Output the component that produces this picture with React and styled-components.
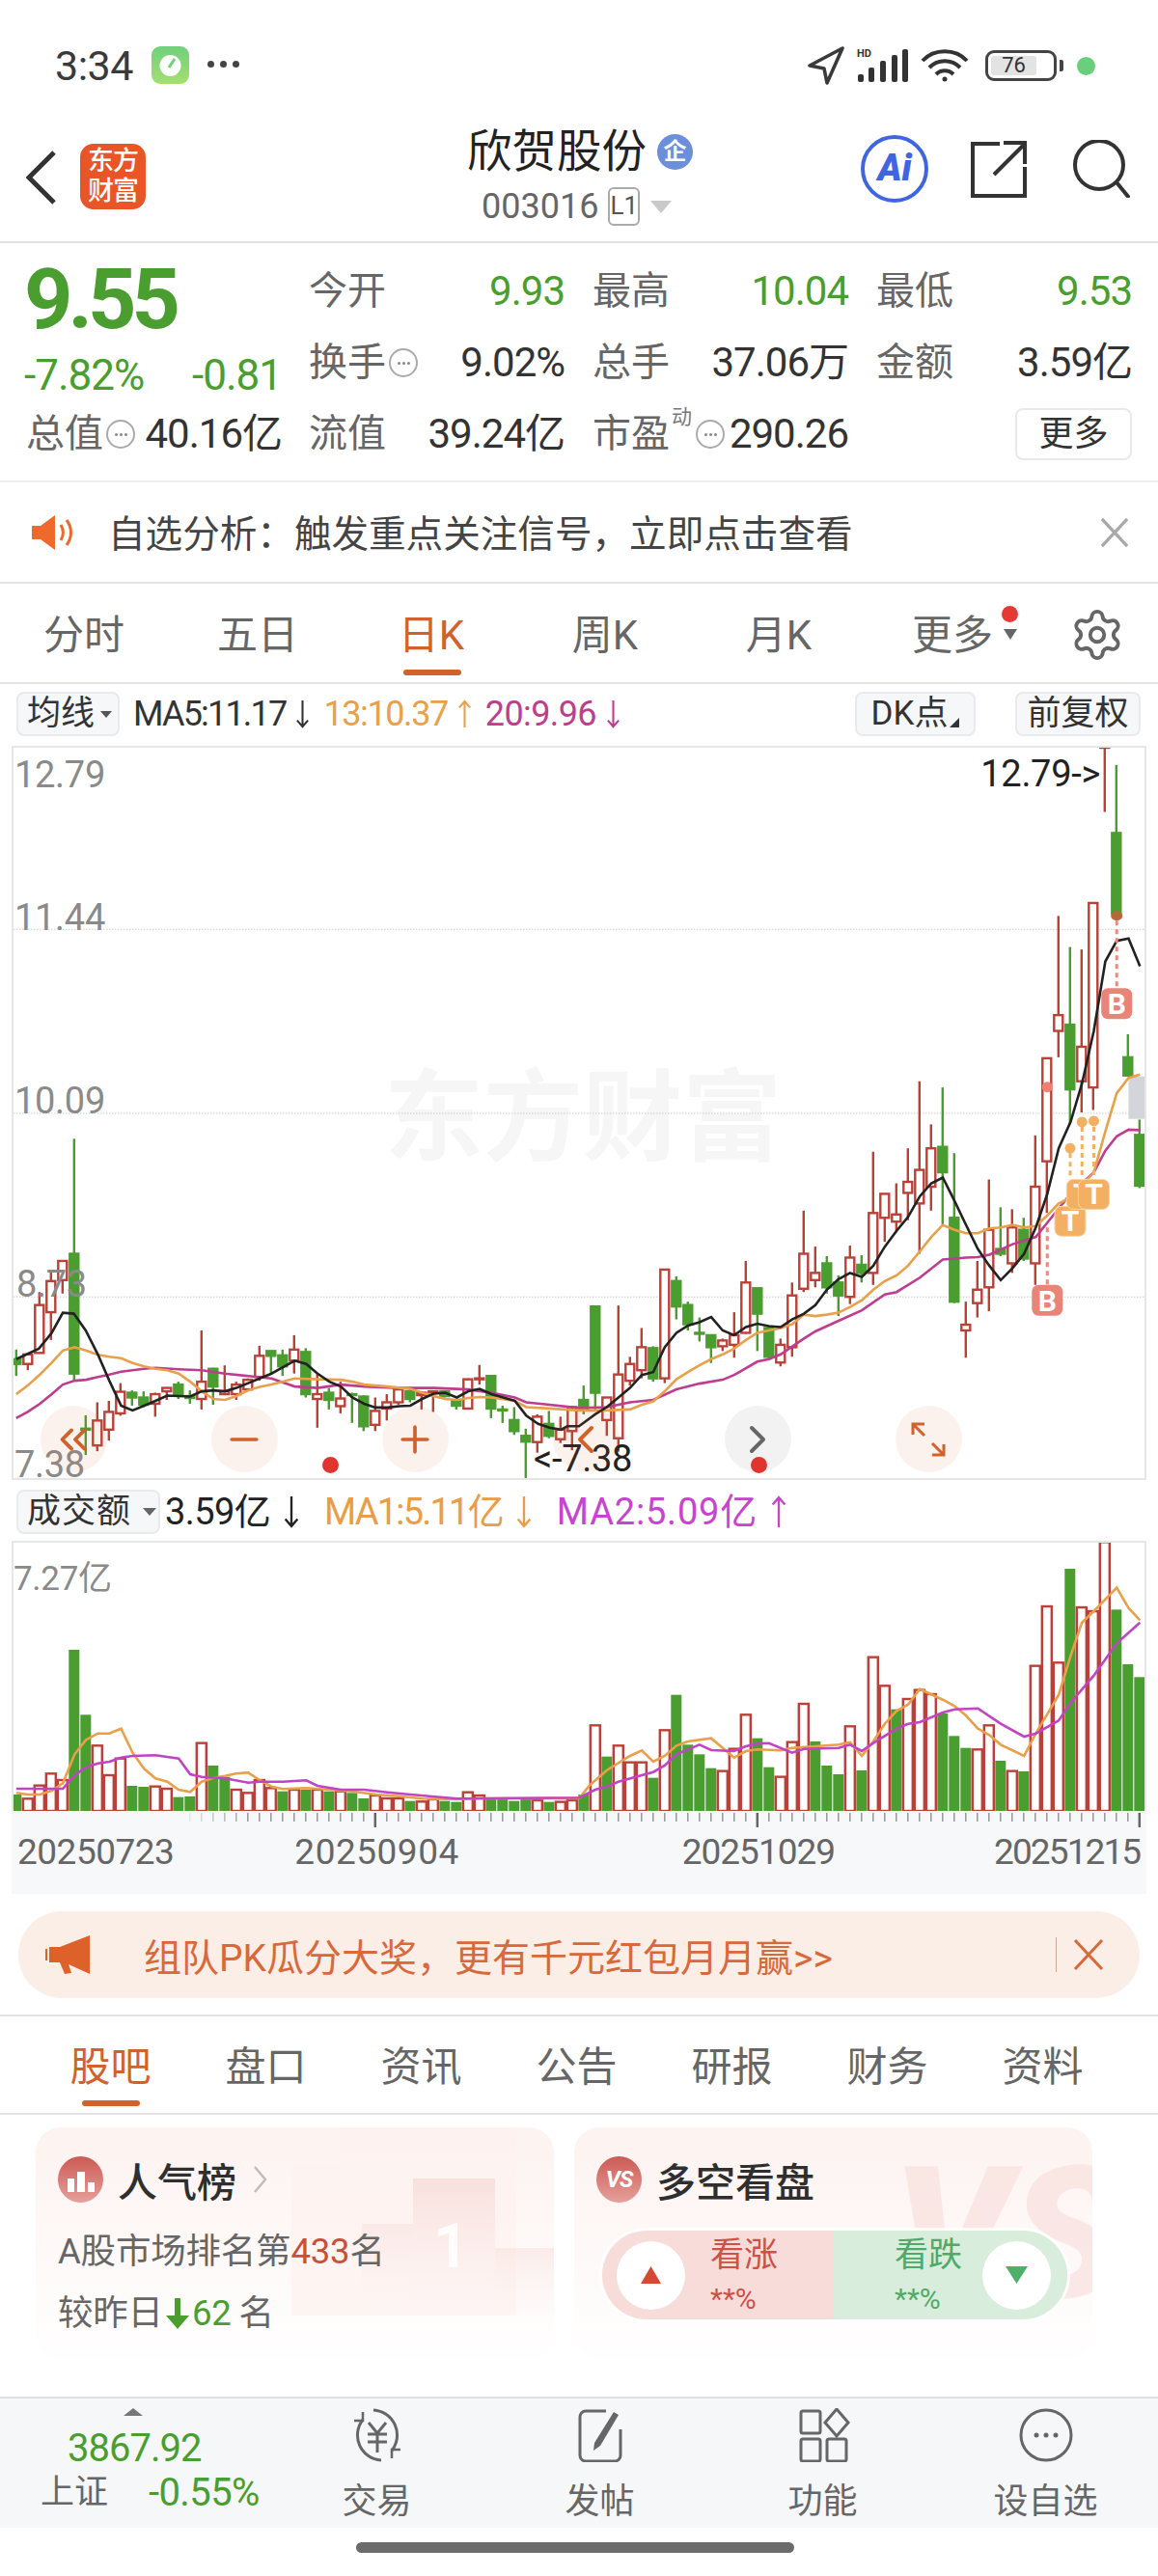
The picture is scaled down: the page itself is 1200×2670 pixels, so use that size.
import React from 'react';
import styled, { createGlobalStyle } from 'styled-components';
import { ChevronLeft, ChevronRight, ChevronsLeft, Minus, Plus, Settings } from 'lucide-react';

const GREEN = '#4a9e2f';
const RED = '#bb4038';
const ORANGE = '#e9a04a';
const ACCENT = '#d1622b';
const FONT = `Roboto, "Noto Sans CJK SC", sans-serif`;

const GlobalStyle = createGlobalStyle`
  html, body { margin: 0; padding: 0; background: #fff; }
  * { box-sizing: border-box; }
  body { font-family: ${FONT}; color: #333; }
`;

// Component Styles
const Page = styled.div`
  width: 1200px;
  height: 2670px;
  overflow: hidden;
  background: #fff;
`;

const Header = styled.header`
  height: 252px;
  border-bottom: 2px solid #e2e2e2;
`;

const StatusBar = styled.div`
  height: 124px;
  padding: 48px 65px 0 57px;
  display: flex;
  align-items: flex-start;
`;

const Clock = styled.span`
  font-size: 43px;
  line-height: 40px;
  letter-spacing: -0.5px;
  color: #3a3a3a;
  margin-right: 19px;
`;

const StatusDots = styled.span`
  display: flex;
  gap: 6px;
  margin: 15px 0 0 19px;
  i { width: 7px; height: 7px; border-radius: 50%; background: #444; }
`;

const StatusRight = styled.div`
  margin-left: auto;
  display: flex;
  align-items: center;
  height: 40px;
  gap: 12px;
`;

const BatteryBox = styled.div`
  width: 74px;
  height: 32px;
  border: 3px solid #444;
  border-radius: 9px;
  padding: 3px;
  display: flex;
  margin-left: 5px;
`;

const BatteryFill = styled.div`
  width: 76%;
  background: #e3e3e3;
  border-radius: 3px;
  font-size: 22px;
  line-height: 20px;
  text-align: center;
  color: #333;
`;

const BatteryTip = styled.i`
  width: 4px;
  height: 12px;
  background: #444;
  border-radius: 0 2px 2px 0;
  margin-left: -9px;
`;

const GreenDot = styled.i`
  width: 19px;
  height: 19px;
  border-radius: 50%;
  background: #69cf7c;
  margin-left: 2px;
`;

const NavBar = styled.div`
  height: 126px;
  padding: 8px 29px 0 27px;
  display: flex;
  align-items: flex-start;
`;

const BackIcon = styled.svg`
  margin-top: 24px;
`;

const Logo = styled.div`
  width: 68px;
  height: 68px;
  margin: 17px 0 0 25px;
  border-radius: 14px;
  background: #e95527;
  color: #fff;
  font-size: 27px;
  line-height: 31px;
  font-weight: 500;
  text-align: center;
  padding-top: 3px;
  letter-spacing: -1px;
`;

const TitleBlock = styled.div`
  width: 270px;
  margin-left: 333px;
`;

const Title = styled.div`
  display: flex;
  align-items: center;
  height: 50px;
  font-size: 46.5px;
  line-height: 50px;
  color: #222;
`;

const CompanyBadge = styled.span`
  width: 37px;
  height: 37px;
  margin-left: 11px;
  border-radius: 50%;
  background: #6c8fdc;
  color: #fff;
  font-size: 24px;
  line-height: 37px;
  font-weight: 700;
  text-align: center;
`;

const CodeRow = styled.div`
  display: flex;
  align-items: center;
  height: 42px;
  margin: 11px 0 0 15px;
  font-size: 36px;
  color: #666;
`;

const LevelTag = styled.span`
  width: 33px;
  height: 40px;
  margin-left: 10px;
  border: 2px solid #aaa;
  border-radius: 6px;
  font-size: 26px;
  line-height: 35px;
  text-align: center;
  color: #555;
`;

const DownCaret = styled.span`
  width: 0;
  height: 0;
  margin-left: ${p => (p.$m === undefined ? 11 : p.$m)}px;
  border-left: ${p => p.$size || 11}px solid transparent;
  border-right: ${p => p.$size || 11}px solid transparent;
  border-top: ${p => (p.$size || 11) * 1.25}px solid ${p => p.$color || '#c9c9c9'};
`;

const NavActions = styled.div`
  margin-left: auto;
  display: flex;
  align-items: center;
  margin-top: 8px;
`;

const AiButton = styled.div`
  width: 70px;
  height: 70px;
  border: 4px solid #3f66e0;
  border-radius: 50%;
  color: #3f66e0;
  font-size: 38px;
  line-height: 60px;
  font-weight: 900;
  font-style: italic;
  text-align: center;
  margin-right: 44px;
`;

const ShareIcon = styled.svg`
  margin-right: 47px;
`;

const Quote = styled.section`
  height: 248px;
  padding: 13px 27px 0;
  display: grid;
  grid-template-columns: 293px 294px 294px 265px;
  grid-auto-rows: 74px;
  border-bottom: 2px solid #eee;
`;

const Price = styled.div`
  margin-top: 8px;
  font-size: 88px;
  line-height: 74px;
  font-weight: 700;
  letter-spacing: -5px;
  margin-left: -2px;
  color: ${GREEN};
`;

const ChangeRow = styled.div`
  display: flex;
  justify-content: space-between;
  width: 267px;
  margin: 13px 0 0 -2px;
  font-size: 44px;
  line-height: 74px;
  letter-spacing: -1px;
  color: ${GREEN};
`;

const Stat = styled.div`
  display: flex;
  align-items: center;
  justify-content: space-between;
  width: 265px;
  font-size: 40px;
  line-height: 74px;
`;

const StatLabel = styled.span`
  display: flex;
  align-items: center;
  color: #666;
`;

const StatValue = styled.span`
  font-size: 42px;
  letter-spacing: -1px;
  color: ${p => p.$color || '#333'};
`;

const Superscript = styled.span`
  font-size: 21px;
  line-height: 21px;
  margin: -36px 1px 0 2px;
  color: #777;
`;

const Hint = styled.span`
  width: 30px;
  height: 30px;
  margin: 0 0 0 3px;
  border: 2px solid #aaa;
  border-radius: 50%;
  display: flex;
  justify-content: center;
  align-items: center;
  gap: 2px;
  i { width: 3px; height: 3px; background: #888; border-radius: 50%; }
`;

const MoreButton = styled.button`
  justify-self: end;
  align-self: center;
  width: 121px;
  height: 54px;
  padding: 0;
  background: #fff;
  border: 2px solid #e9e9e9;
  border-radius: 8px;
  font: 36px/50px ${FONT};
  color: #333;
`;

const Notice = styled.div`
  height: 105px;
  padding: 0 30px 0 33px;
  display: flex;
  align-items: center;
  gap: 36px;
  font-size: 38.6px;
  color: #444;
  border-bottom: 2px solid #e4e4e4;
  span { flex: 1; margin-left: -3px; margin-top: -3px; }
`;

const PeriodTabs = styled.nav`
  height: 104px;
  display: grid;
  grid-template-columns: repeat(6, 180px) 120px;
  margin-left: -3px;
  width: 1203px;
  border-bottom: 2px solid #e4e4e4;
`;

const PeriodTab = styled.div`
  position: relative;
  display: flex;
  justify-content: center;
  padding-top: 27px;
  font-size: 42px;
  line-height: 54px;
  color: ${p => (p.$active ? ACCENT : '#666')};
  ${p => p.$active && `
    &::after {
      content: '';
      position: absolute;
      left: 61px;
      bottom: 7px;
      width: 60px;
      height: 6px;
      border-radius: 3px;
      background: ${ACCENT};
    }
  `}
`;

const TabRedDot = styled.i`
  position: absolute;
  left: 141px;
  top: 23px;
  width: 17px;
  height: 17px;
  border-radius: 50%;
  background: #e53935;
`;

const TabCaret = styled.i`
  position: absolute;
  left: 143px;
  top: 47px;
  border-left: 7px solid transparent;
  border-right: 7px solid transparent;
  border-top: 11px solid #666;
`;

const GearCell = styled.div`
  display: flex;
  justify-content: center;
  padding-top: 24px;
  color: #666;
`;

const IndicatorRow = styled.div`
  height: 64px;
  padding: 8px 18px 0 17px;
  display: flex;
  align-items: flex-start;
  font-size: 36px;
  line-height: 46px;
  letter-spacing: -1.4px;
`;

const IndicatorButton = styled.div`
  display: flex;
  align-items: center;
  justify-content: ${p => (p.$center ? 'center' : 'flex-start')};
  gap: 6px;
  width: ${p => p.$w}px;
  height: 46px;
  padding: ${p => (p.$center ? 0 : '0 0 0 9px')};
  margin: ${p => p.$m || 0};
  background: #f6f7f9;
  border: 2px solid #e8eaee;
  border-radius: 8px;
  font-size: 35px;
  letter-spacing: ${p => p.$ls || 0}px;
  color: #333;
`;

const CornerMark = styled.i`
  border-left: 10px solid transparent;
  border-bottom: 10px solid #333;
  align-self: flex-end;
  margin: 0 0 7px -4px;
`;

const MaValue = styled.span`
  display: inline-flex;
  align-items: center;
  color: ${p => p.$color};
  margin-left: ${p => p.$m || 0}px;
  letter-spacing: ${p => (p.$ls === undefined ? 'inherit' : `${p.$ls}px`)};
`;

const ArrowSvg = styled.svg`
  margin: 0 ${p => p.$m}px;
  flex: none;
`;

const ChartBox = styled.div`
  position: relative;
  width: 1176px;
  height: ${p => p.$h}px;
  margin-left: 12px;
  border: 2px solid #e6e6e6;
  ${p => p.$open && 'border-bottom: 0;'}
  overflow: hidden;
`;

const PlotSvg = styled.svg`
  display: block;
`;

const AxisText = styled.text`
  font-family: ${FONT};
  font-size: ${p => p.$size || 38}px;
  letter-spacing: -0.3px;
  fill: ${p => p.$fill || '#8a8a8a'};
`;

const Watermark = styled.text`
  font-family: ${FONT};
  font-size: 103px;
  font-weight: 700;
  fill: #f6f6f6;
`;

const Badge = styled.text`
  font-family: ${FONT};
  font-size: 30px;
  font-weight: 700;
  fill: #fff;
  text-anchor: middle;
`;

const ZoomButton = styled.div`
  position: absolute;
  left: ${p => p.$x - 48.5}px;
  top: 682px;
  width: 69px;
  height: 69px;
  border-radius: 50%;
  background: ${p => (p.$grey ? 'rgba(0,0,0,0.05)' : 'rgba(225,110,50,0.09)')};
  color: ${p => (p.$grey ? '#666' : ACCENT)};
  display: flex;
  align-items: center;
  justify-content: center;
`;

const RedMark = styled.i`
  position: absolute;
  left: ${p => p.$x - 22.5}px;
  top: 735px;
  width: 17px;
  height: 17px;
  border-radius: 50%;
  background: #e0352f;
`;

const VolumeRow = styled(IndicatorRow)`
  height: 63px;
  padding-top: 10px;
  font-size: 38px;
`;

const DateAxis = styled.div`
  width: 1176px;
  height: 86px;
  margin-left: 12px;
  background: #f7f8fa;
`;

const TickSvg = styled.svg`
  display: block;
`;

const DateLabels = styled.div`
  display: flex;
  font-size: 37px;
  line-height: 40px;
  color: #666;
  margin-top: 3px;
`;

const DateLabel = styled.span`
  margin-left: ${p => p.$m}px;
  letter-spacing: ${p => p.$ls}px;
`;

const Promo = styled.div`
  width: 1162px;
  height: 90px;
  margin: 18px 0 17px 19px;
  padding: 0 37px 0 28px;
  display: flex;
  align-items: center;
  background: #fbeee6;
  border-radius: 45px;
  font-size: 39px;
  color: #d9683a;
  span { margin-left: 56px; flex: 1; }
  b { width: 1px; height: 36px; background: #c9a898; margin-right: 17px; }
`;

const ContentTabs = styled.nav`
  height: 104px;
  padding: 0 34px;
  display: grid;
  grid-template-columns: repeat(7, 161px);
  border-top: 2px solid #e4e4e4;
  border-bottom: 2px solid #e4e4e4;
`;

const ContentTab = styled(PeriodTab)`
  padding-top: 26px;
  &::after { left: 51px; bottom: 7px; }
`;

const Cards = styled.div`
  display: flex;
  gap: 21px;
  padding: 13px 0 0 37px;
  height: 292px;
`;

const Card = styled.div`
  position: relative;
  width: 537px;
  height: 240px;
  border-radius: 26px;
  overflow: hidden;
  background: linear-gradient(180deg, #fdf3f0 0%, #fefafa 65%, #fffefe 100%);
  padding: 30px 0 0 23px;
`;

const PodiumBackdrop = styled.svg`
  position: absolute;
  left: 200px;
  top: 0;
  width: 337px;
  height: 210px;
`;

const CardHead = styled.div`
  position: relative;
  display: flex;
  align-items: center;
  height: 48px;
  font-size: 41px;
  font-weight: 500;
  color: #2f2f2f;
`;

const CardIcon = styled.span`
  width: 47px;
  height: 48px;
  margin-right: 15px;
  border-radius: 50%;
  background: linear-gradient(180deg, #cc5a55 0%, #e6a09b 100%);
  color: #fff;
  font-size: 24px;
  font-weight: 700;
  font-style: italic;
  line-height: 48px;
  text-align: center;
  letter-spacing: -1px;
`;

const RankIconSvg = styled.svg`
  vertical-align: -5px;
`;

const MoreChevron = styled.svg`
  margin-left: 17px;
`;

const RankLine = styled.div`
  position: relative;
  display: flex;
  align-items: center;
  margin-top: ${p => p.$m}px;
  font-size: 36.5px;
  line-height: 42px;
  letter-spacing: -0.2px;
  color: #666;
  em { font-style: normal; color: ${p => p.$em || '#c8503a'}; margin: 0 ${p => p.$gap || 0}px 0 0; }
`;

const RankArrow = styled.svg`
  margin: 0 3px;
`;

const VsBackdrop = styled.span`
  position: absolute;
  left: 330px;
  top: 16px;
  font-size: 190px;
  line-height: 190px;
  font-weight: 900;
  font-style: italic;
  color: #f9e2df;
  opacity: 0.75;
`;

const VotePill = styled.div`
  position: relative;
  display: flex;
  width: 482px;
  height: 92px;
  margin: 29px 0 0 6px;
  border-radius: 46px;
  overflow: hidden;
  box-shadow: 0 0 0 3px rgba(255,255,255,0.8);
`;

const VoteSide = styled.div`
  flex: 1;
  display: flex;
  align-items: center;
  flex-direction: ${p => (p.$up ? 'row' : 'row-reverse')};
  padding: 0 ${p => (p.$up ? 0 : 17)}px 0 ${p => (p.$up ? 15 : 0)}px;
  background: ${p => (p.$up ? '#f8dcda' : '#d9eddc')};
  color: ${p => (p.$up ? '#cc5245' : '#4fa968')};
`;

const VoteCircle = styled.i`
  width: 71px;
  height: 71px;
  border-radius: 50%;
  background: #fff;
  display: flex;
  align-items: center;
  justify-content: center;
`;

const VoteText = styled.div`
  width: 70px;
  margin: ${p => (p.$up ? '0 0 0 26px' : '0 21px 0 0')};
  font-size: 35px;
  line-height: 42px;
  text-align: left;
  small { display: block; font-size: 30px; line-height: 32px; margin-top: 8px; white-space: nowrap; }
`;

const BottomBar = styled.footer`
  height: 136px;
  border-top: 2px solid #dedfe4;
  background: #f6f7f9;
  display: flex;
`;

const IndexBlock = styled.div`
  position: relative;
  width: 310px;
  padding: 32px 0 0 42px;
  display: flex;
  flex-wrap: wrap;
  align-content: flex-start;
  &::before {
    content: '';
    position: absolute;
    left: 128px;
    top: 10px;
    border-left: 10px solid transparent;
    border-right: 10px solid transparent;
    border-bottom: 8px solid #777;
  }
`;

const IndexValue = styled.div`
  width: 100%;
  padding-left: 28px;
  font-size: 40px;
  line-height: 40px;
  letter-spacing: -1px;
  color: ${GREEN};
`;

const IndexName = styled.span`
  font-size: 35px;
  line-height: 44px;
  margin-top: 4px;
  color: #666;
`;

const IndexChange = styled.span`
  font-size: 40px;
  line-height: 44px;
  margin: 4px 0 0 42px;
  letter-spacing: -0.6px;
  color: ${GREEN};
`;

const BarItems = styled.div`
  flex: 1;
  display: grid;
  grid-template-columns: repeat(4, 231px);
  margin-left: -35px;
`;

const BarCell = styled.div`
  display: flex;
  flex-direction: column;
  align-items: center;
  padding-top: 10px;
  font-size: 36px;
  line-height: 42px;
  color: #666;
  svg { display: block; margin-bottom: 20px; }
`;

const HomeIndicator = styled.div`
  width: 454px;
  height: 11px;
  margin: 15px 0 0 369px;
  border-radius: 6px;
  background: #6b6b6b;
`;

// Chart data, read off the daily K-line: [colour, high, body top, body bottom, low]
const candles = [
  ['g',1285,1305,1315,1340],['r',1295,1295,1315,1328],['r',1165,1192,1292,1292],['r',1120,1142,1207,1265],['r',1100,1100,1140,1168],
  ['g',845,1085,1335,1350],['g',1422,1450,1452,1505],['r',1395,1433,1485,1497],['r',1392,1415,1452,1475],['r',1355,1373,1418,1423],
  ['g',1370,1375,1385,1402],['g',1372,1385,1400,1405],['r',1375,1378,1398,1425],['r',1365,1365,1372,1390],['g',1352,1358,1380,1388],
  ['g',1370,1382,1386,1398],['r',1245,1352,1388,1410],['g',1323,1325,1362,1400],['r',1318,1372,1378,1380],['r',1352,1358,1378,1390],
  ['r',1345,1348,1368,1368],['r',1277,1298,1342,1350],['g',1288,1288,1298,1335],['g',1285,1297,1320,1340],['r',1255,1285,1308,1335],
  ['g',1282,1290,1378,1385],['r',1335,1378,1388,1448],['g',1365,1375,1390,1410],['r',1352,1387,1403,1418],['g',1375,1378,1380,1438],
  ['g',1380,1383,1445,1455],['r',1385,1413,1442,1455],['r',1378,1395,1408,1433],['r',1365,1368,1395,1400],['g',1368,1372,1388,1395],
  ['r',1372,1375,1380,1410],['r',1372,1372,1373,1415],['g',1370,1372,1382,1385],['g',1388,1392,1402,1410],['r',1345,1347,1408,1408],
  ['r',1317,1345,1347,1358],['g',1338,1340,1408,1428],['g',1402,1410,1412,1438],['g',1405,1432,1455,1463],['g',1450,1465,1477,1555],
  ['r',1420,1425,1478,1500],['g',1413,1440,1465,1470],['r',1425,1452,1472,1480],['r',1402,1405,1455,1495],['g',1360,1390,1408,1420],
  ['g',1195,1195,1375,1410],['r',1385,1385,1432,1465],['r',1193,1337,1470,1498],['r',1300,1315,1350,1360],['r',1240,1280,1328,1345],
  ['g',1278,1282,1345,1352],['r',1118,1118,1345,1355],['g',1132,1142,1195,1222],['g',1185,1192,1232,1245],['g',1218,1250,1252,1268],
  ['g',1255,1255,1280,1313],['r',1262,1266,1278,1288],['r',1207,1255,1275,1302],['r',1100,1145,1250,1252],['g',1157,1157,1210,1288],
  ['g',1237,1240,1300,1305],['r',1262,1275,1312,1320],['r',1145,1172,1280,1300],['r',995,1085,1158,1165],['r',1070,1125,1140,1155],
  ['g',1090,1105,1155,1168],['g',1130,1145,1172,1215],['r',1068,1093,1175,1190],['g',1088,1108,1125,1145],['r',872,1000,1125,1150],
  ['r',960,960,1010,1060],['r',938,1003,1018,1040],['r',865,935,958,1015],['r',725,910,980,1085],['r',815,865,945,995],
  ['g',738,862,915,1025],['g',875,1010,1185,1188],['r',1185,1233,1245,1302],['r',1100,1160,1188,1218],['r',930,1035,1155,1205],
  ['g',988,1075,1085,1090],['r',992,1030,1105,1125],['g',1010,1035,1095,1100],['r',838,945,1105,1150],['r',677,677,892,1000],
  ['r',380,587,620,675],['g',445,607,742,815],['r',450,653,725,790],['r',353,353,738,785],['r',27,27,29,163],
  ['g',65,207,375,380],['g',627,675,713,715],['g',805,837,943,948],
];

// [colour, bar top]
const volumes = [
  ['g',990],['r',1003],['r',962],['r',925],['r',945],['g',540],['g',742],['r',838],['r',930],['r',878],
  ['g',963],['g',966],['r',965],['r',972],['g',998],['g',996],['r',830],['g',900],['g',935],['r',975],
  ['r',985],['r',945],['r',970],['g',980],['r',975],['g',975],['r',975],['g',980],['r',980],['g',985],
  ['g',1002],['r',993],['r',1002],['r',1002],['g',1010],['r',1012],['r',1005],['g',1010],['g',1013],['r',983],
  ['r',993],['g',1005],['g',1005],['g',1010],['g',1005],['r',1008],['g',1013],['r',1013],['r',1008],['g',990],
  ['r',775],['g',872],['r',838],['r',890],['r',890],['g',938],['r',790],['g',680],['g',835],['g',865],
  ['g',908],['r',917],['r',848],['r',742],['g',815],['g',905],['r',935],['r',827],['r',708],['g',825],
  ['g',900],['g',927],['r',778],['g',915],['r',563],['r',652],['g',725],['r',693],['r',665],['r',678],
  ['g',738],['g',808],['g',845],['r',850],['r',775],['g',885],['r',917],['g',918],['r',590],['r',405],
  ['r',580],['g',288],['r',408],['r',420],['r',205],['g',415],['g',585],['g',625],
];

const ma5 = [
  [[44,1305],[105,1283],[140,1250],[170,1208],[200,1210],[232,1245],[265,1295],[296,1350],[328,1402],[359,1412],[390,1402],[421,1392],[453,1381],[484,1382],[515,1383],[546,1372],[578,1370],[609,1372],[640,1365],[672,1355],[703,1345],[735,1335],[766,1322],[798,1308],[829,1315],[860,1335],[892,1352],[923,1362],[954,1385],[986,1398],[1017,1406],[1049,1406],[1080,1403],[1111,1402],[1143,1388],[1174,1377],[1205,1375],[1237,1385],[1268,1372],[1299,1367],[1331,1378],[1394,1392],[1425,1423],[1457,1440],[1488,1448],[1519,1452]],
  [[-32,1445],[0,1445],[44,1420],[75,1405],[107,1385],[138,1365],[170,1338],[201,1332],[232,1280],[264,1250],[295,1235],[326,1228],[358,1217],[389,1245],[420,1255],[452,1238],[483,1231],[514,1236],[546,1238],[577,1222],[609,1210],[640,1192],[671,1160],[703,1138],[734,1125],[766,1133],[797,1110],[828,1070],[860,1037],[891,1008],[923,965],[954,938],[985,926],[1017,975],[1048,1025],[1080,1075],[1111,1110],[1142,1140],[1174,1115],[1205,1085],[1237,1030],[1268,960],[1299,865],[1331,810],[1362,730],[1394,620],[1425,475],[1456,432],[1488,427],[1519,485]],
];

const ma13 = [
  [[44,1378],[75,1360],[108,1337],[140,1312],[170,1287],[202,1280],[233,1287],[265,1296],[296,1300],[328,1303],[359,1313],[390,1320],[421,1325],[453,1328],[484,1335],[515,1352],[546,1372],[578,1388],[609,1390],[640,1382],[672,1370],[703,1363],[735,1358],[766,1352],[798,1345],[860,1347],[923,1348],[954,1352],[986,1358],[1049,1362],[1111,1367],[1143,1375],[1174,1382],[1205,1388],[1237,1390],[1268,1386],[1299,1384],[1331,1385],[1394,1392],[1425,1405],[1488,1408],[1568,1412]],
  [[0,1412],[75,1412],[138,1410],[170,1400],[201,1393],[232,1372],[264,1347],[295,1332],[326,1318],[358,1305],[389,1295],[420,1283],[452,1265],[483,1250],[514,1245],[546,1240],[577,1232],[609,1212],[640,1215],[671,1212],[703,1208],[734,1196],[766,1182],[797,1160],[828,1142],[860,1130],[891,1110],[923,1080],[954,1050],[985,1025],[1017,1035],[1048,1042],[1080,1042],[1111,1032],[1142,1030],[1174,1025],[1205,1030],[1237,1027],[1268,1005],[1299,980],[1331,968],[1394,915],[1425,830],[1456,750],[1488,718],[1519,711]],
];

const ma20 = [
  [[44,1428],[75,1415],[108,1398],[140,1378],[170,1358],[202,1350],[233,1348],[265,1342],[296,1337],[328,1331],[390,1325],[421,1323],[484,1326],[546,1328],[609,1335],[672,1340],[735,1345],[798,1362],[860,1365],[923,1358],[986,1362],[1080,1365],[1174,1365],[1268,1368],[1331,1375],[1394,1385],[1425,1395],[1488,1400],[1568,1407]],
  [[0,1407],[75,1405],[138,1395],[201,1390],[264,1368],[326,1356],[389,1348],[420,1338],[483,1310],[514,1305],[546,1295],[609,1262],[640,1247],[703,1225],[766,1203],[828,1170],[860,1165],[923,1135],[985,1097],[1048,1093],[1080,1092],[1111,1087],[1174,1065],[1237,1050],[1268,1020],[1331,960],[1394,915],[1425,870],[1456,840],[1488,826],[1519,827]],
];

const volMa1 = [
  [[44,985],[75,990],[108,990],[140,978],[170,955],[202,865],[233,820],[265,800],[296,800],[328,785],[359,860],[390,910],[421,940],[453,950],[484,975],[515,982],[546,950],[578,938],[609,932],[640,925],[672,922],[703,945],[735,965],[766,973],[829,970],[892,975],[954,980],[1017,990],[1080,995],[1143,1003],[1237,1005],[1300,1002],[1568,1002]],
  [[0,1002],[30,960],[75,915],[138,870],[170,853],[201,888],[232,870],[264,838],[295,825],[358,815],[420,875],[452,855],[483,850],[546,853],[577,845],[640,840],[703,835],[734,828],[766,870],[797,825],[828,770],[860,730],[891,710],[923,662],[985,695],[1017,715],[1048,745],[1080,785],[1111,805],[1142,835],[1205,870],[1237,800],[1299,680],[1331,560],[1362,455],[1394,420],[1456,347],[1488,410],[1519,448]],
];

const volMa2 = [
  [[44,972],[170,972],[202,930],[233,905],[265,893],[296,888],[328,875],[359,870],[421,868],[484,878],[515,927],[546,935],[609,940],[672,953],[703,950],[766,950],[829,946],[860,963],[923,975],[986,975],[1049,983],[1111,990],[1237,1003],[1331,1002],[1568,1000]],
  [[0,1000],[44,975],[75,965],[107,950],[170,930],[201,920],[232,900],[264,865],[326,835],[358,852],[420,855],[452,840],[483,832],[514,830],[577,860],[609,848],[703,845],[734,835],[766,855],[797,830],[860,785],[891,770],[923,765],[985,735],[1017,725],[1080,722],[1142,770],[1205,810],[1237,800],[1299,760],[1331,705],[1394,620],[1456,520],[1519,455]],
];

const cx = i => 16.8 + 12 * i;
const yK = z => 774 + (z - 27) * 0.4967;
const yV = z => 1530 + z / 3;
const xL = z => z / 2.613;
const xR = z => 600 + z / 2.613;

const linePoints = (parts, y) => [
  ...parts[0].map(([x, v]) => `${xL(x).toFixed(1)},${y(v).toFixed(1)}`),
  ...parts[1].map(([x, v]) => `${xR(x).toFixed(1)},${y(v).toFixed(1)}`),
].join(' ');

const col = c => (c === 'r' ? RED : GREEN);

// Icons
const Arrow = ({ up, color, w = 15, h = 30, m = 10 }) => (
  <ArrowSvg $m={m} width={w} height={h} viewBox="0 0 16 32">
    <path d={up ? 'M8 31V2M2 9l6-7 6 7' : 'M8 1v29M2 23l6 7 6-7'} fill="none" stroke={color} strokeWidth="2.2" />
  </ArrowSvg>
);

const CloseIcon = ({ size, color, weight = 3 }) => (
  <svg width={size} height={size + 2} viewBox="0 0 32 34">
    <path d="M2 2l28 30M30 2 2 32" fill="none" stroke={color} strokeWidth={weight} />
  </svg>
);

const BarIcon = ({ children }) => (
  <svg width="60" height="56" viewBox="0 0 60 56" fill="none" stroke="#666" strokeWidth="3">{children}</svg>
);

const StatusIcons = () => (
  <StatusRight>
    <svg width="40" height="40" viewBox="0 0 40 40">
      <path d="M37 2 3 20l15 3 3 15z" fill="none" stroke="#3a3a3a" strokeWidth="3.6" strokeLinejoin="round" />
    </svg>
    <svg width="54" height="36" viewBox="0 0 54 36">
      <text x="0" y="9" fontSize="11" fontWeight="700" fontFamily="Roboto" fill="#333">HD</text>
      <rect x="1" y="27" width="6" height="8" rx="2" fill="#333" />
      <rect x="12" y="20" width="6" height="15" rx="2" fill="#333" />
      <rect x="24" y="13" width="6" height="22" rx="2" fill="#333" />
      <rect x="36" y="7" width="6" height="28" rx="2" fill="#333" />
      <rect x="47" y="1" width="6" height="34" rx="2" fill="#333" />
    </svg>
    <svg width="50" height="36" viewBox="0 0 50 36" fill="none" stroke="#333" strokeWidth="4">
      <path d="M2 13C14 0 36 0 48 13" />
      <path d="M9 20c9-9 23-9 32 0" />
      <path d="M16 27c5-5 13-5 18 0" />
      <circle cx="25" cy="32" r="2.5" fill="#333" stroke="none" />
    </svg>
    <BatteryBox><BatteryFill>76</BatteryFill></BatteryBox>
    <BatteryTip />
    <GreenDot />
  </StatusRight>
);

const ChartK = () => (
  <PlotSvg width="1172" height="757" viewBox="14 775 1172 757">
    <Watermark x="398" y="1195">东方财富</Watermark>
    {[408, 792, 1175].map(z => (
      <line key={z} x1="14" x2="1186" y1={yK(z)} y2={yK(z)} stroke="#ccc" strokeWidth="1" strokeDasharray="1.5 1.5" />
    ))}
    <rect x={xR(1488)} y={yK(715)} width="18" height="44" fill="#d3d5da" />
    {candles.map(([c, hi, top, bot, lo], i) => (
      <g key={i} stroke={col(c)} strokeWidth="2.4">
        <line x1={cx(i)} x2={cx(i)} y1={yK(hi)} y2={yK(lo)} />
        {c === 'r'
          ? <rect x={cx(i) - 4.5} y={yK(top)} width="9" height={Math.max(yK(bot) - yK(top), 1)} fill="#fff" />
          : <rect x={cx(i) - 4.5} y={yK(top)} width="9" height={Math.max(yK(bot) - yK(top), 1)} fill={GREEN} />}
      </g>
    ))}
    <line x1={cx(94) - 5} x2={cx(94) + 5} y1={yK(27)} y2={yK(27)} stroke={RED} strokeWidth="2" />
    <polyline points={linePoints(ma20, yK)} fill="none" stroke="#be3d8f" strokeWidth="2.6" />
    <polyline points={linePoints(ma13, yK)} fill="none" stroke={ORANGE} strokeWidth="2.6" />
    <polyline points={linePoints(ma5, yK)} fill="none" stroke="#222" strokeWidth="2.6" />

    <g stroke="#ea8a7d" strokeWidth="3" strokeDasharray="5 4">
      <line x1={xR(1268)} x2={xR(1268)} y1={yK(1030)} y2={yK(1150)} />
      <line x1={xR(1456)} x2={xR(1456)} y1={yK(390)} y2={yK(530)} />
    </g>
    <g stroke="#f3b063" strokeWidth="3" strokeDasharray="5 4">
      <line x1={xR(1330)} x2={xR(1330)} y1={yK(875)} y2={yK(930)} />
      <line x1={xR(1362)} x2={xR(1362)} y1={yK(820)} y2={yK(930)} />
      <line x1={xR(1394)} x2={xR(1394)} y1={yK(820)} y2={yK(930)} />
    </g>
    <ellipse cx={xR(1268)} cy={yK(737)} rx="5.5" ry="5.5" fill="#f07f72" />
    <ellipse cx={xR(1456)} cy={yK(380)} rx="6" ry="5" fill="#b4693a" />
    <circle cx={xR(1330)} cy={yK(865)} r="5.5" fill="#f3b063" />
    <circle cx={xR(1362)} cy={yK(810)} r="5.5" fill="#f3b063" />
    <circle cx={xR(1394)} cy={yK(808)} r="5.5" fill="#f3b063" />

    {[[1268, 1182, 'B'], [1456, 563, 'B']].map(([x, z, t]) => (
      <g key={z}>
        <rect x={xR(x) - 16} y={yK(z) - 16} width="32" height="32" rx="7" fill="#ea8478" />
        <Badge x={xR(x)} y={yK(z) + 11}>{t}</Badge>
      </g>
    ))}
    {[[1330, 1016], [1362, 960], [1394, 960]].map(([x, z]) => (
      <g key={x}>
        <rect x={xR(x) - 16} y={yK(z) - 15} width="32" height="31" rx="7" fill="#f3b063" stroke="#f8d5aa" strokeWidth="1" />
        <Badge x={xR(x)} y={yK(z) + 11}>T</Badge>
      </g>
    ))}

    <AxisText x="15" y={yK(112)}>12.79</AxisText>
    <AxisText x="15" y={yK(410)}>11.44</AxisText>
    <AxisText x="15" y={yK(792)}>10.09</AxisText>
    <AxisText x="17" y={yK(1175)}>8.73</AxisText>
    <AxisText x="15" y={yK(1552)}>7.38</AxisText>
    <AxisText x="1140" y={yK(110)} textAnchor="end" $fill="#222">12.79-&gt;</AxisText>
    <AxisText x="553" y={yK(1538)} $fill="#222">&lt;-7.38</AxisText>
  </PlotSvg>
);

const ChartVolume = () => (
  <PlotSvg width="1172" height="278" viewBox="14 1599 1172 278">
    <AxisText x="14" y="1648" $size={35}>7.27亿</AxisText>
    {volumes.map(([c, top], i) => (c === 'r'
      ? <rect key={i} x={cx(i) - 5} y={yV(top)} width="10" height={1877 - yV(top)} fill="#fff" stroke={RED} strokeWidth="2.4" />
      : <rect key={i} x={cx(i) - 5.5} y={yV(top)} width="11" height={1877 - yV(top)} fill={GREEN} />
    ))}
    <polyline points={linePoints(volMa1, yV)} fill="none" stroke={ORANGE} strokeWidth="2.6" />
    <polyline points={linePoints(volMa2, yV)} fill="none" stroke="#c044c4" strokeWidth="2.6" />
  </PlotSvg>
);

const DateTicks = () => (
  <TickSvg width="1176" height="20" viewBox="12 1877 1176 20">
    {Array.from({ length: 83 }, (_, k) => k + 15).map(i => {
      const major = i === 31 || i === 64 || i === 97;
      return (
        <line
          key={i}
          x1={cx(i)}
          x2={cx(i)}
          y1="1879"
          y2={major ? 1894 : 1888}
          stroke={major ? '#666' : '#999'}
          strokeWidth={major ? 2.5 : 1.5}
          opacity={i < 20 ? 0.2 + (i - 15) * 0.15 : 1}
        />
      );
    })}
  </TickSvg>
);

// Main Component
export default function App() {
  return (
    <Page>
      <GlobalStyle />
      <Header>
        <StatusBar>
          <Clock>3:34</Clock>
          <svg width="39" height="39" viewBox="0 0 39 39">
            <defs>
              <linearGradient id="appGreen" x1="0" y1="0" x2="0" y2="1">
                <stop offset="0" stopColor="#6fd07c" />
                <stop offset="1" stopColor="#a3e06f" />
              </linearGradient>
            </defs>
            <rect width="39" height="39" rx="9" fill="url(#appGreen)" />
            <circle cx="19.5" cy="20" r="11" fill="#fff" />
            <path d="M18 22l6-9" stroke="#6fd07c" strokeWidth="3" />
          </svg>
          <StatusDots><i /><i /><i /></StatusDots>
          <StatusIcons />
        </StatusBar>
        <NavBar>
          <BackIcon width="31" height="56" viewBox="0 0 31 56">
            <path d="M29 2 3 28l26 26" fill="none" stroke="#333" strokeWidth="5" />
          </BackIcon>
          <Logo>东方<br />财富</Logo>
          <TitleBlock>
            <Title>欣贺股份<CompanyBadge>企</CompanyBadge></Title>
            <CodeRow>003016<LevelTag>L1</LevelTag><DownCaret /></CodeRow>
          </TitleBlock>
          <NavActions>
            <AiButton>Ai</AiButton>
            <ShareIcon width="58" height="60" viewBox="0 0 58 60">
              <path d="M30 4H2v54h54V28M24 36 55 5M34 3h22v22" fill="none" stroke="#333" strokeWidth="4" />
            </ShareIcon>
            <svg width="60" height="60" viewBox="0 0 60 60">
              <circle cx="28" cy="26" r="25" fill="none" stroke="#333" strokeWidth="4" />
              <path d="m46 44 13 16" stroke="#333" strokeWidth="4" />
            </svg>
          </NavActions>
        </NavBar>
      </Header>

      <Quote>
        <Price>9.55</Price>
        <Stat><StatLabel>今开</StatLabel><StatValue $color={GREEN}>9.93</StatValue></Stat>
        <Stat><StatLabel>最高</StatLabel><StatValue $color={GREEN}>10.04</StatValue></Stat>
        <Stat><StatLabel>最低</StatLabel><StatValue $color={GREEN}>9.53</StatValue></Stat>

        <ChangeRow><span>-7.82%</span><span>-0.81</span></ChangeRow>
        <Stat><StatLabel>换手<Hint><i /><i /><i /></Hint></StatLabel><StatValue>9.02%</StatValue></Stat>
        <Stat><StatLabel>总手</StatLabel><StatValue>37.06万</StatValue></Stat>
        <Stat><StatLabel>金额</StatLabel><StatValue>3.59亿</StatValue></Stat>

        <Stat><StatLabel>总值<Hint><i /><i /><i /></Hint></StatLabel><StatValue>40.16亿</StatValue></Stat>
        <Stat><StatLabel>流值</StatLabel><StatValue>39.24亿</StatValue></Stat>
        <Stat>
          <StatLabel>市盈<Superscript>动</Superscript><Hint><i /><i /><i /></Hint></StatLabel>
          <StatValue>290.26</StatValue>
        </Stat>
        <MoreButton>更多</MoreButton>
      </Quote>

      <Notice>
        <svg width="46" height="36" viewBox="0 0 46 36">
          <path d="M0 11h9L24 0v36L9 25H0z" fill="#ee6a2c" />
          <path d="M30 10c3 5 3 11 0 16M36 5c6 8 6 18 0 26" fill="none" stroke="#ee6a2c" strokeWidth="3" />
        </svg>
        <span>自选分析：触发重点关注信号，立即点击查看</span>
        <CloseIcon size={30} color="#a8a8a8" weight={3.5} />
      </Notice>

      <PeriodTabs>
        <PeriodTab>分时</PeriodTab>
        <PeriodTab>五日</PeriodTab>
        <PeriodTab $active>日K</PeriodTab>
        <PeriodTab>周K</PeriodTab>
        <PeriodTab>月K</PeriodTab>
        <PeriodTab>更多<TabRedDot /><TabCaret /></PeriodTab>
        <GearCell><Settings size={58} strokeWidth={1.6} /></GearCell>
      </PeriodTabs>

      <IndicatorRow>
        <IndicatorButton $w={107}>均线<DownCaret $m={0} $size={6} $color="#555" /></IndicatorButton>
        <MaValue $color="#333" $m={14} $ls={-1.8}>MA5:11.17<Arrow color="#333" /></MaValue>
        <MaValue $color={ORANGE} $m={4}>13:10.37<Arrow up color={ORANGE} /></MaValue>
        <MaValue $color="#be3d8f" $m={4} $ls={-0.6}>20:9.96<Arrow color="#be3d8f" /></MaValue>
        <IndicatorButton $w={125} $center $m="0 41px 0 auto">DK点<CornerMark /></IndicatorButton>
        <IndicatorButton $w={130} $center>前复权</IndicatorButton>
      </IndicatorRow>

      <ChartBox $h={761}>
        <ChartK />
        <ZoomButton $x={76}><ChevronsLeft size={46} strokeWidth={2} /></ZoomButton>
        <ZoomButton $x={253}><Minus size={44} strokeWidth={2} /></ZoomButton>
        <ZoomButton $x={430}><Plus size={44} strokeWidth={2} /></ZoomButton>
        <ZoomButton $x={607}><ChevronLeft size={48} strokeWidth={2} /></ZoomButton>
        <ZoomButton $x={785} $grey><ChevronRight size={48} strokeWidth={2} /></ZoomButton>
        <ZoomButton $x={962}>
          <svg width="36" height="36" viewBox="0 0 36 36" fill="none" stroke={ACCENT} strokeWidth="3">
            <path d="M2 13V2h12M2 2l12 12M34 23v11H22M34 34 22 22" />
          </svg>
        </ZoomButton>
        <RedMark $x={342} />
        <RedMark $x={786} />
      </ChartBox>

      <VolumeRow>
        <IndicatorButton $w={149} $ls={1}>成交额<DownCaret $m={6} $size={7} $color="#666" /></IndicatorButton>
        <MaValue $color="#222" $m={5} $ls={-0.6}>3.59亿<Arrow w={20} h={34} m={12} color="#222" /></MaValue>
        <MaValue $color="#ea9d46" $m={12} $ls={-1.8}>MA1:5.11亿<Arrow w={20} h={34} m={12} color="#ea9d46" /></MaValue>
        <MaValue $color="#c744cf" $m={12} $ls={0.8}>MA2:5.09亿<Arrow up w={20} h={34} m={12} color="#c744cf" /></MaValue>
      </VolumeRow>

      <ChartBox $h={280} $open>
        <ChartVolume />
      </ChartBox>

      <DateAxis>
        <DateTicks />
        <DateLabels>
          <DateLabel $m={6} $ls={-0.5}>20250723</DateLabel>
          <DateLabel $m={125} $ls={0.5}>20250904</DateLabel>
          <DateLabel $m={231} $ls={-1}>20251029</DateLabel>
          <DateLabel $m={165} $ls={-1.9}>20251215</DateLabel>
        </DateLabels>
      </DateAxis>

      <Promo>
        <svg width="46" height="40" viewBox="0 0 46 40">
          <path d="M46 0v40L24 30l3 9-7 1-5-12H4V12h11z" fill="#dd6128" />
          <rect x="0" y="14" width="2" height="12" fill="#dd6128" />
        </svg>
        <span>组队PK瓜分大奖，更有千元红包月月赢&gt;&gt;</span>
        <b />
        <CloseIcon size={32} color="#d9683a" weight={3} />
      </Promo>

      <ContentTabs>
        <ContentTab $active>股吧</ContentTab>
        <ContentTab>盘口</ContentTab>
        <ContentTab>资讯</ContentTab>
        <ContentTab>公告</ContentTab>
        <ContentTab>研报</ContentTab>
        <ContentTab>财务</ContentTab>
        <ContentTab>资料</ContentTab>
      </ContentTabs>

      <Cards>
        <Card>
          <PodiumBackdrop viewBox="0 0 337 210">
            <defs>
              <linearGradient id="podium" x1="0" y1="0" x2="0" y2="1">
                <stop offset="0" stopColor="#f8e0dd" />
                <stop offset="1" stopColor="#fdf4f3" stopOpacity="0.3" />
              </linearGradient>
            </defs>
            <path d="M65 40h50V0h183v195H65z" fill="#fdf0ed" opacity="0.55" />
            <rect x="191" y="53" width="85" height="142" fill="url(#podium)" />
            <rect x="138" y="100" width="53" height="95" fill="url(#podium)" opacity="0.55" />
            <rect x="276" y="125" width="61" height="70" fill="url(#podium)" opacity="0.55" />
            <text x="212" y="145" fontSize="64" fontWeight="700" fontFamily="Roboto" fill="#fff" opacity="0.9">1</text>
          </PodiumBackdrop>
          <CardHead>
            <CardIcon>
              <RankIconSvg width="30" height="24" viewBox="0 0 30 24" fill="#fff">
                <rect x="1" y="10" width="7" height="14" />
                <rect x="11" y="3" width="8" height="21" />
                <rect x="22" y="14" width="7" height="10" />
              </RankIconSvg>
            </CardIcon>
            人气榜
            <MoreChevron width="16" height="30" viewBox="0 0 16 30">
              <path d="M2 2l11 13L2 28" fill="none" stroke="#bdbdbd" strokeWidth="2.5" />
            </MoreChevron>
          </CardHead>
          <RankLine $m={30}>A股市场排名第<em>433</em>名</RankLine>
          <RankLine $m={22} $em={GREEN} $gap={8}>
            较昨日
            <RankArrow width="24" height="32" viewBox="0 0 24 32">
              <path d="M9 0h6v18h9L12 32 0 18h9z" fill={GREEN} />
            </RankArrow>
            <em>62</em>名
          </RankLine>
        </Card>

        <Card>
          <VsBackdrop>VS</VsBackdrop>
          <CardHead>
            <CardIcon>VS</CardIcon>
            多空看盘
          </CardHead>
          <VotePill>
            <VoteSide $up>
              <VoteCircle>
                <svg width="21" height="18" viewBox="0 0 21 18"><path d="M10.5 0 21 18H0z" fill="#d54a32" /></svg>
              </VoteCircle>
              <VoteText $up>看涨<small>**%</small></VoteText>
            </VoteSide>
            <VoteSide>
              <VoteCircle>
                <svg width="23" height="18" viewBox="0 0 23 18"><path d="M0 0h23L11.5 18z" fill="#4fb06a" /></svg>
              </VoteCircle>
              <VoteText>看跌<small>**%</small></VoteText>
            </VoteSide>
          </VotePill>
        </Card>
      </Cards>

      <BottomBar>
        <IndexBlock>
          <IndexValue>3867.92</IndexValue>
          <IndexName>上证</IndexName>
          <IndexChange>-0.55%</IndexChange>
        </IndexBlock>
        <BarItems>
          <BarCell>
            <BarIcon>
              <path d="M26 2a26 26 0 0 1 19 42M34 54A26 26 0 0 1 15 12" />
              <path d="M15 4v9H6M45 52v-9h9" strokeWidth="2.5" />
              <path d="M21 15l9 11 9-11M20 27h20M20 35h20M30 26v20" />
            </BarIcon>
            交易
          </BarCell>
          <BarCell>
            <BarIcon>
              <path d="M36 3H15a6 6 0 0 0-6 6v40a6 6 0 0 0 6 6h30a6 6 0 0 0 6-6V22" />
              <path d="M24 36 44 4l5 3-19 32-7 5z" fill="#666" stroke="none" />
            </BarIcon>
            发帖
          </BarCell>
          <BarCell>
            <BarIcon>
              <rect x="7" y="3" width="20" height="23" rx="2" />
              <rect x="7" y="32" width="20" height="23" rx="2" />
              <rect x="34" y="32" width="20" height="23" rx="2" />
              <path d="m44 1 12 14-12 14-12-14z" />
            </BarIcon>
            功能
          </BarCell>
          <BarCell>
            <BarIcon>
              <circle cx="30" cy="28" r="26" />
              <circle cx="20" cy="28" r="2.5" fill="#666" stroke="none" />
              <circle cx="30" cy="28" r="2.5" fill="#666" stroke="none" />
              <circle cx="40" cy="28" r="2.5" fill="#666" stroke="none" />
            </BarIcon>
            设自选
          </BarCell>
        </BarItems>
      </BottomBar>
      <HomeIndicator />
    </Page>
  );
}
